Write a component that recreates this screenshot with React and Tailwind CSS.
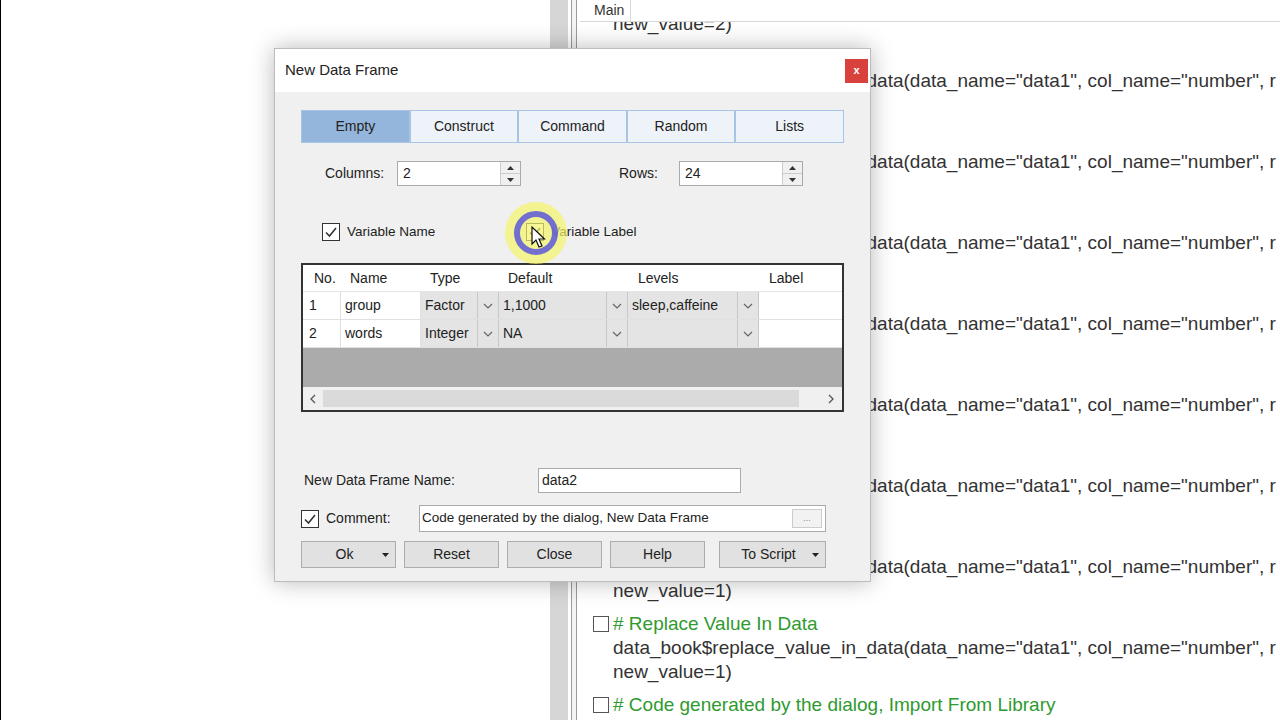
import React from 'react';

const codeFont = { fontFamily: '"Liberation Sans", Arial, sans-serif' };
const uiFont = { fontFamily: '"Liberation Sans", Arial, sans-serif' };

function CodeBlock({ comment, code, last }) {
  return (
    <div className="mb-[9px]">
      <div className="h-6 flex items-center">
        <span className="w-[16px] h-[16px] border border-[#555] bg-white mr-[4px] shrink-0" />
        <span className="text-[#2f9a2f]">{comment}</span>
      </div>
      <div className="h-6 flex items-center pl-[20px] text-[#333]">{code}</div>
      <div className="h-6 flex items-center pl-[20px] text-[#333]">{last}</div>
    </div>
  );
}

function Check({ checked = true, className = '' }) {
  return (
    <span className={`w-[18px] h-[18px] border border-[#333] bg-white flex items-center justify-center ${className}`}>
      {checked && (
        <svg width="14" height="14" viewBox="0 0 14 14">
          <path d="M2 7.5 L5.5 11 L12 3" fill="none" stroke="#333" strokeWidth="1.6" />
        </svg>
      )}
    </span>
  );
}

function Spin({ value, width }) {
  return (
    <div className={`flex h-[25px] border border-[#aaa] bg-white ${width}`}>
      <div className="flex-1 px-[5px] flex items-center text-[14px] text-[#222]">{value}</div>
      <div className="w-[20px] border-l border-[#ccc] bg-[#f0f0f0] flex flex-col">
        <div className="flex-1 flex items-center justify-center border-b border-[#ccc]">
          <svg width="7" height="4" viewBox="0 0 7 4"><path d="M0 4 L3.5 0 L7 4Z" fill="#333" /></svg>
        </div>
        <div className="flex-1 flex items-center justify-center">
          <svg width="7" height="4" viewBox="0 0 7 4"><path d="M0 0 L3.5 4 L7 0Z" fill="#333" /></svg>
        </div>
      </div>
    </div>
  );
}

function Chevron() {
  return (
    <svg width="10" height="6" viewBox="0 0 10 6">
      <path d="M1 1 L5 5 L9 1" fill="none" stroke="#666" strokeWidth="1.2" />
    </svg>
  );
}

function DropCell({ value, width }) {
  return (
    <div className={`${width} h-full flex bg-[#e4e4e4] border-r border-[#c8c8c8]`}>
      <div className="flex-1 flex items-center px-[4px] truncate">{value}</div>
      <div className="w-[21px] border-l border-[#c8c8c8] flex items-center justify-center">
        <Chevron />
      </div>
    </div>
  );
}

function Btn({ label, width, drop, className = '' }) {
  return (
    <div className={`${width} h-[27px] border border-[#adadad] bg-[#e1e1e1] flex items-center text-[14px] text-[#222] relative ${className}`}>
      <span className={`flex-1 text-center ${drop ? 'pr-[8px]' : ''}`}>{label}</span>
      {drop && (
        <svg className="absolute right-[6px] top-[11px]" width="7" height="4" viewBox="0 0 7 4">
          <path d="M0 0 L3.5 4 L7 0Z" fill="#222" />
        </svg>
      )}
    </div>
  );
}

export default function App() {
  const tabs = ['Empty', 'Construct', 'Command', 'Random', 'Lists'];
  const code = 'data_book$replace_value_in_data(data_name="data1", col_name="number", r';
  const blocks = [];
  for (let i = 0; i < 8; i++) {
    blocks.push({ comment: '# Replace Value In Data', code, last: 'new_value=1)' });
  }
  blocks.push({ comment: '# Code generated by the dialog, Import From Library', code, last: 'new_value=1)' });

  return (
    <div className="w-[1280px] h-[720px] bg-white relative overflow-hidden flex" style={uiFont}>
      {/* left edge */}
      <div className="w-px bg-black" />
      <div className="w-[549px] bg-white" />
      <div className="w-[18px] bg-[#d6d6d6]" />
      <div className="w-[3px] bg-white" />
      <div className="w-px bg-[#9a9a9a]" />
      <div className="w-[4px] bg-[#f4f4f4]" />
      <div className="w-px bg-[#9a9a9a]" />
      <div className="w-[3px] bg-white" />

      {/* script panel */}
      <div className="flex-1 flex flex-col min-w-0">
        <div className="h-[22px] flex items-end border-b border-[#d8d8d8] bg-white relative z-10 pl-[8px]">
          <div className="h-[22px] px-[6px] border-r border-[#d8d8d8] text-[14px] text-[#333] flex items-center">Main</div>
        </div>
        <div className="flex-1 overflow-hidden text-[19px] whitespace-nowrap pl-[13px]" style={codeFont}>
          <div className="-mt-[58px]">
            <CodeBlock comment="# Replace Value In Data" code={code} last="new_value=2)" />
            {blocks.map((b, i) => (
              <CodeBlock key={i} {...b} />
            ))}
          </div>
        </div>
      </div>

      {/* dialog */}
      <div className="absolute left-[274px] top-[48px] w-[597px] h-[534px] bg-[#f0f0f0] border border-[#bcbcbc] shadow-[0_0_22px_rgba(0,0,0,0.28)] flex flex-col">
        <div className="h-[43px] bg-white flex items-center justify-between pl-[10px] pr-[2px]">
          <span className="text-[15px] text-[#222]">New Data Frame</span>
          <div className="w-[23px] h-[24px] bg-[#d9413d] flex items-center justify-center text-white text-[11px] font-bold">x</div>
        </div>

        <div className="flex-1 px-[26px] pt-[18px] text-[14px] text-[#222]">
          {/* tabs */}
          <div className="flex h-[33px] border border-[#a8c4e4] w-[543px]">
            {tabs.map((t, i) => (
              <div
                key={t}
                className={`flex-1 flex items-center justify-center ${i > 0 ? 'border-l-2 border-[#a8c4e4]' : ''} ${i === 0 ? 'bg-[#95b6dc]' : 'bg-[#eef3f9]'}`}
              >
                {t}
              </div>
            ))}
          </div>

          {/* columns / rows */}
          <div className="flex items-center mt-[18px] h-[25px]">
            <span className="ml-[24px] w-[72px]">Columns:</span>
            <Spin value="2" width="w-[124px]" />
            <span className="ml-[98px] w-[60px]">Rows:</span>
            <Spin value="24" width="w-[124px]" />
          </div>

          {/* checkboxes */}
          <div className="flex items-center mt-[36px] h-[20px] relative text-[13.5px]">
            <Check className="ml-[21px]" />
            <span className="ml-[7px]">Variable Name</span>
            <Check className="ml-[91px] border-[#7a9a5a]" />
            <span className="ml-[7px]">Variable Label</span>
            <svg className="absolute left-[201px] top-[-23px]" width="68" height="68" viewBox="0 0 68 68">
              <circle cx="34" cy="34" r="31" fill="#f4f36a" opacity="0.7" />
              <circle cx="34" cy="34" r="19" fill="none" stroke="#5a57d8" strokeWidth="6" opacity="0.85" />
            </svg>
            <svg className="absolute left-[230px] top-[4px]" width="18" height="24" viewBox="0 0 18 24">
              <path d="M1 1 L1 18 L5 14 L8 21 L11 20 L8 13 L13.5 13 Z" fill="#fff" stroke="#111" strokeWidth="1.2" />
            </svg>
          </div>

          {/* grid */}
          <div className="mt-[21px] w-[543px] h-[149px] border-2 border-[#333] bg-[#ababab] flex flex-col">
            <div className="h-[27px] bg-white flex items-center border-b border-[#e6e6e6]">
              <div className="w-[38px] pl-[11px]">No.</div>
              <div className="w-[80px] pl-[9px]">Name</div>
              <div className="w-[78px] pl-[9px]">Type</div>
              <div className="w-[129px] pl-[9px]">Default</div>
              <div className="w-[131px] pl-[10px]">Levels</div>
              <div className="flex-1 pl-[10px]">Label</div>
            </div>
            {[
              ['1', 'group', 'Factor', '1,1000', 'sleep,caffeine'],
              ['2', 'words', 'Integer', 'NA', ''],
            ].map((r) => (
              <div key={r[0]} className="h-[28px] bg-white flex items-stretch border-b border-[#e0e0e0]">
                <div className="w-[38px] pl-[6px] flex items-center border-r border-[#e0e0e0]">{r[0]}</div>
                <div className="w-[80px] pl-[4px] flex items-center border-r border-[#e0e0e0]">{r[1]}</div>
                <DropCell value={r[2]} width="w-[78px]" />
                <DropCell value={r[3]} width="w-[129px]" />
                <DropCell value={r[4]} width="w-[131px]" />
                <div className="flex-1 bg-white" />
              </div>
            ))}
            <div className="flex-1" />
            <div className="h-[23px] bg-[#f0f0f0] flex items-center">
              <div className="w-[20px] flex items-center justify-center">
                <svg width="6" height="10" viewBox="0 0 6 10"><path d="M5 1 L1 5 L5 9" fill="none" stroke="#555" strokeWidth="1.3" /></svg>
              </div>
              <div className="w-[476px] h-[17px] bg-[#dadada]" />
              <div className="ml-auto w-[22px] flex items-center justify-center">
                <svg width="6" height="10" viewBox="0 0 6 10"><path d="M1 1 L5 5 L1 9" fill="none" stroke="#555" strokeWidth="1.3" /></svg>
              </div>
            </div>
          </div>

          {/* name */}
          <div className="flex items-center mt-[56px] h-[25px]">
            <span className="ml-[3px] w-[234px]">New Data Frame Name:</span>
            <div className="w-[203px] h-[25px] border border-[#aaa] bg-white flex items-center px-[3px]">data2</div>
          </div>

          {/* comment */}
          <div className="flex items-center mt-[12px] h-[27px]">
            <Check className="w-[17px] h-[17px]" />
            <span className="ml-[7px] w-[93px]">Comment:</span>
            <div className="w-[407px] h-[27px] border border-[#aaa] bg-white flex items-center pl-[2px] pr-[3px] text-[13.5px]">
              <span className="flex-1">Code generated by the dialog, New Data Frame</span>
              <div className="w-[30px] h-[19px] border border-[#ccc] bg-[#f2f2f2] flex items-center justify-center text-[9px] text-[#888]">...</div>
            </div>
          </div>

          {/* buttons */}
          <div className="flex items-center mt-[9px]">
            <Btn label="Ok" width="w-[95px]" drop />
            <Btn label="Reset" width="w-[95px]" className="ml-[8px]" />
            <Btn label="Close" width="w-[95px]" className="ml-[8px]" />
            <Btn label="Help" width="w-[95px]" className="ml-[8px]" />
            <Btn label="To Script" width="w-[107px]" drop className="ml-[14px]" />
          </div>
        </div>
      </div>
    </div>
  );
}
